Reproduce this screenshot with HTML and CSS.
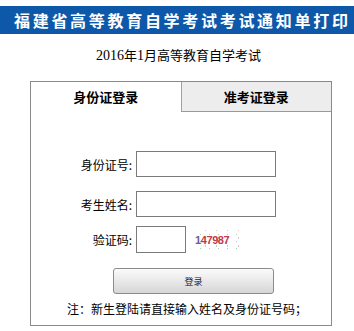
FILE: index.html
```html
<!DOCTYPE html>
<html lang="zh-CN">
<head>
<meta charset="utf-8">
<title>福建省高等教育自学考试考试通知单打印</title>
<link rel="stylesheet" href="styles.css">
</head>
<body>
<div class="banner">福建省高等教育自学考试考试通知单打印</div>
<div class="exam-title"><span class="num">2016</span>年<span class="num">1</span>月高等教育自学考试</div>
<div class="panel">
  <div class="tabs">
    <div class="tab active">身份证登录</div>
    <div class="tab">准考证登录</div>
  </div>
  <div class="form">
    <div class="row r1">
      <label class="lbl">身份证号:</label>
      <input class="field" type="text">
    </div>
    <div class="row r2">
      <label class="lbl">考生姓名:</label>
      <input class="field" type="text">
    </div>
    <div class="row r3">
      <label class="lbl">验证码:</label>
      <input class="field small" type="text">
      <span class="captcha"><span class="c1">1</span>47987</span>
    </div>
    <div class="btn-row"><button class="btn" type="button">登录</button></div>
    <div class="note">注：新生登陆请直接输入姓名及身份证号码；</div>
  </div>
</div>
</body>
</html>
```
FILE: styles.css
```css
html, body {
  margin: 0;
  padding: 0;
  background: #ffffff;
}
body {
  font-family: "Noto Sans CJK SC", "Liberation Sans", sans-serif;
  color: #000;
  width: 354px;
}
.banner {
  margin-top: 6px;
  height: 28px;
  line-height: 28px;
  background: #0d58a8;
  color: #ffffff;
  font-size: 16px;
  font-weight: bold;
  letter-spacing: 2.7px;
  padding-left: 14px;
  white-space: nowrap;
  overflow: hidden;
}
.exam-title {
  margin-top: 13px;
  height: 16px;
  line-height: 16px;
  font-size: 13px;
  text-align: center;
  padding-left: 3px;
}
.exam-title .num {
  font-family: "Liberation Serif", serif;
  font-size: 14px;
}
.panel {
  margin-top: 18px;
  margin-left: 30px;
  width: 302px;
  height: 245px;
  box-sizing: border-box;
  border: 1px solid #8a8a8a;
}
.tabs {
  display: flex;
  height: 30px;
}
.tab {
  flex: 1;
  box-sizing: border-box;
  text-align: center;
  font-size: 13px;
  font-weight: bold;
  line-height: 30px;
}
.tab + .tab {
  background: #ededed;
  border-left: 1px solid #7fa9cf;
  border-bottom: 1px solid #9a9a9a;
}
.form {
  padding-top: 39px;
}
.row {
  display: flex;
  align-items: center;
  height: 26px;
}
.r2 { margin-top: 14px; }
.r3 { margin-top: 9px; height: 27px; }
.lbl {
  width: 101px;
  text-align: right;
  font-size: 12px;
  margin-right: 4px;
}
.field {
  box-sizing: border-box;
  width: 140px;
  height: 26px;
  border: 1px solid #7a7a7a;
  padding: 0;
  margin: 0;
  background: #fff;
}
.field.small {
  width: 50px;
  height: 27px;
}
.captcha {
  display: inline-block;
  margin-left: 9px;
  width: 47px;
  height: 20px;
  line-height: 20px;
  font-family: "Liberation Sans", sans-serif;
  font-size: 11px;
  font-weight: bold;
  color: #c23a48;
  letter-spacing: -0.4px;
  background:
    radial-gradient(circle, #a8d0b2 0.5px, transparent 0.9px) 1px 1px / 9px 7px,
    radial-gradient(circle, #ddc2cf 0.5px, transparent 0.9px) 5px 4px / 11px 8px;
}
.captcha .c1 {
  color: #6a5d9a;
}
.btn-row {
  margin-top: 15px;
  padding-left: 82px;
}
.btn {
  display: block;
  width: 161px;
  height: 26px;
  border: 1px solid #8c8c8c;
  border-radius: 3px;
  background: linear-gradient(#fbfbfb, #e9e9e9 50%, #d6d6d6);
  font-family: "Noto Sans CJK SC", sans-serif;
  font-size: 9px;
  color: #222;
  padding: 0;
}
.note {
  margin-top: 7px;
  padding-left: 36px;
  font-size: 12px;
  line-height: 16px;
  white-space: nowrap;
}
```
